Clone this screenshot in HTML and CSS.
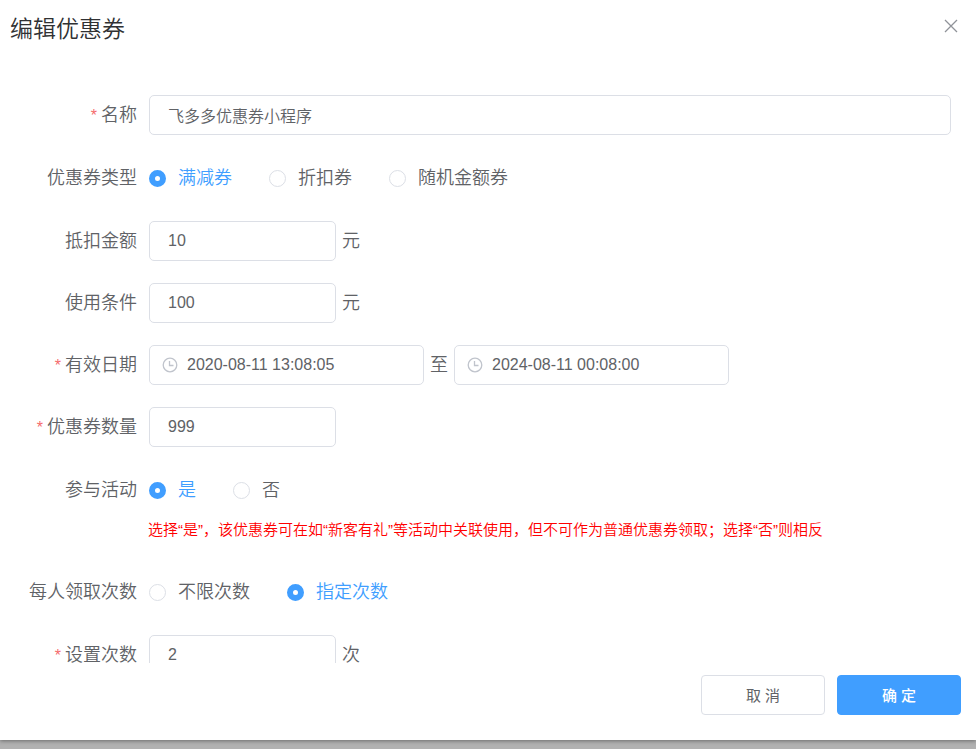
FILE: index.html
```html
<!DOCTYPE html>
<html lang="zh-CN">
<head>
  <meta charset="UTF-8" />
  <meta name="viewport" content="width=device-width, initial-scale=1.0" />
  <title>编辑优惠券</title>
  <link rel="stylesheet" href="styles.css">
</head>
<body>

  <form class="dialog" role="dialog" aria-labelledby="dialogTitle">
    <div class="dialog-header">
      <h1 id="dialogTitle">编辑优惠券</h1>
      <button type="button" class="close-btn" aria-label="关闭">
        <svg width="14" height="14" viewBox="0 0 14 14" fill="none" stroke="currentColor" stroke-width="1.3">
          <path d="M1 1l12 12M13 1L1 13" />
        </svg>
      </button>
    </div>

    <div class="dialog-body">
      <div class="form-item">
        <label class="form-label required" for="name">名称</label>
        <input type="text" id="name" class="input" value="飞多多优惠券小程序" />
      </div>

      <div class="form-item radio-item" role="radiogroup" aria-labelledby="typeLabel">
        <span class="form-label" id="typeLabel">优惠券类型</span>
        <label class="radio"><input type="radio" name="type" checked /><span>满减券</span></label>
        <label class="radio"><input type="radio" name="type" /><span>折扣券</span></label>
        <label class="radio"><input type="radio" name="type" /><span>随机金额券</span></label>
      </div>

      <div class="form-item">
        <label class="form-label" for="amount">抵扣金额</label>
        <input type="text" id="amount" class="input input-short" value="10" />
        <span class="unit">元</span>
      </div>

      <div class="form-item">
        <label class="form-label" for="condition">使用条件</label>
        <input type="text" id="condition" class="input input-short" value="100" />
        <span class="unit">元</span>
      </div>

      <div class="form-item">
        <label class="form-label required" for="startDate">有效日期</label>
        <div class="date-box">
          <svg width="16" height="16" viewBox="0 0 16 16" fill="none" stroke="currentColor" stroke-width="1.3">
            <circle cx="8" cy="8" r="6.8" />
            <path d="M7.5 4v4.5h4" />
          </svg>
          <input type="text" id="startDate" value="2020-08-11 13:08:05" />
        </div>
        <label class="unit" for="endDate">至</label>
        <div class="date-box">
          <svg width="16" height="16" viewBox="0 0 16 16" fill="none" stroke="currentColor" stroke-width="1.3">
            <circle cx="8" cy="8" r="6.8" />
            <path d="M7.5 4v4.5h4" />
          </svg>
          <input type="text" id="endDate" value="2024-08-11 00:08:00" />
        </div>
      </div>

      <div class="form-item">
        <label class="form-label required" for="count">优惠券数量</label>
        <input type="text" id="count" class="input input-short" value="999" />
      </div>

      <div class="form-item radio-item has-tip" role="radiogroup" aria-labelledby="activityLabel">
        <span class="form-label" id="activityLabel">参与活动</span>
        <label class="radio"><input type="radio" name="activity" checked /><span>是</span></label>
        <label class="radio"><input type="radio" name="activity" /><span>否</span></label>
      </div>
      <p class="tip">选择“是”，该优惠券可在如“新客有礼”等活动中关联使用，但不可作为普通优惠券领取；选择“否”则相反</p>

      <div class="form-item radio-item" role="radiogroup" aria-labelledby="limitLabel">
        <span class="form-label" id="limitLabel">每人领取次数</span>
        <label class="radio"><input type="radio" name="limit" /><span>不限次数</span></label>
        <label class="radio"><input type="radio" name="limit" checked /><span>指定次数</span></label>
      </div>

      <div class="form-item">
        <label class="form-label required" for="times">设置次数</label>
        <input type="text" id="times" class="input input-short" value="2" />
        <span class="unit">次</span>
      </div>
    </div>

    <div class="dialog-footer">
      <button type="button" class="btn">取 消</button>
      <button type="button" class="btn btn-primary">确 定</button>
    </div>
  </form>

</body>
</html>
```

FILE: styles.css
```css
* {
  margin: 0;
  padding: 0;
  box-sizing: border-box;
  font-family: "Liberation Sans", "Noto Sans CJK SC", sans-serif;
}

body {
  height: 100vh;
  padding-bottom: 9px;
  background-color: #b1b1b1;
  color: #606266;
  font-size: 18px;
  font-weight: 350;
}

.dialog {
  height: 100%;
  display: flex;
  flex-direction: column;
  background-color: #fff;
  box-shadow: 0 1px 4px rgba(0, 0, 0, 0.4);
}

.dialog-header {
  display: flex;
  justify-content: space-between;
  align-items: flex-start;
  height: 58px;
  padding: 12px 18px 0 10px;
}

.dialog-header h1 {
  color: #303133;
  font-size: 23px;
  font-weight: 350;
  line-height: 34px;
}

.close-btn {
  height: 28px;
  border: none;
  background: none;
  color: #909399;
  cursor: pointer;
}

.close-btn svg {
  display: block;
}

.dialog-body {
  flex: 1;
  min-height: 0;
  padding: 37px 25px 37px 0;
  overflow-y: auto;
  scrollbar-width: none;
}

.form-item {
  display: flex;
  align-items: center;
  height: 40px;
  margin-bottom: 22px;
  line-height: 24px;
}

.radio-item {
  height: 42px;
}

.has-tip {
  margin-bottom: 0;
}

.form-label {
  flex: none;
  width: 149px;
  padding-right: 12px;
  text-align: right;
}

.required::before {
  content: "*";
  margin-right: 4px;
  color: #f56c6c;
  font-size: 16px;
}

.input {
  flex: 1;
  min-width: 0;
  height: 40px;
  padding: 0 18px;
  border: 1px solid #dcdfe6;
  border-radius: 5px;
  outline: none;
  color: #606266;
  font-size: 16px;
  font-weight: 350;
}

.input-short {
  flex: none;
  width: 187px;
}

.input:focus,
.date-box:focus-within {
  border-color: #409eff;
}

.unit {
  padding: 0 6px;
}

.date-box {
  display: flex;
  align-items: center;
  gap: 9px;
  width: 275px;
  height: 40px;
  padding: 0 12px;
  border: 1px solid #dcdfe6;
  border-radius: 5px;
  color: #c0c4cc;
}

.date-box svg {
  flex: none;
}

.date-box input {
  flex: 1;
  min-width: 0;
  border: none;
  outline: none;
  color: #606266;
  font-size: 16px;
}

.radio {
  display: flex;
  align-items: center;
  gap: 12px;
  margin-right: 37px;
  cursor: pointer;
}

.radio input {
  appearance: none;
  width: 17px;
  height: 17px;
  border: 1px solid #dcdfe6;
  border-radius: 50%;
  background-color: #fff;
  cursor: pointer;
}

.radio input:checked {
  border: 6px solid #409eff;
}

.radio input:checked + span {
  color: #409eff;
}

.tip {
  margin: 0 0 22px 148px;
  color: #f00;
  font-size: 15px;
  line-height: 38px;
}

.dialog-footer {
  display: flex;
  justify-content: flex-end;
  gap: 12px;
  padding: 12px 15px 25px;
}

.btn {
  width: 124px;
  height: 40px;
  padding-bottom: 2px;
  border: 1px solid #dcdfe6;
  border-radius: 4px;
  background-color: #fff;
  color: #606266;
  font-size: 15px;
  cursor: pointer;
}

.btn:hover {
  border-color: #409eff;
  color: #409eff;
}

.btn-primary {
  border-color: #409eff;
  background-color: #409eff;
  color: #fff;
  font-weight: 500;
}

.btn-primary:hover {
  background-color: #66b1ff;
  color: #fff;
}
```
